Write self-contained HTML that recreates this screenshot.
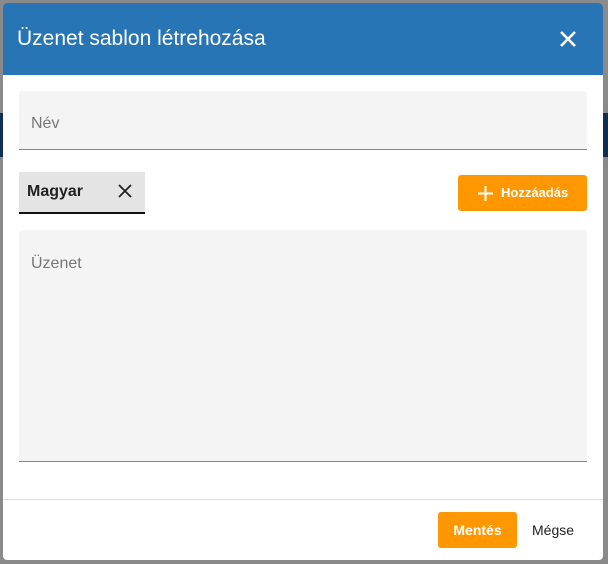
<!DOCTYPE html>
<html><head><meta charset="utf-8"><style>
body{margin:0;width:608px;height:564px;background:#8a8a8a;position:relative;overflow:hidden;font-family:"Liberation Sans",Roboto,sans-serif}
.bgband{position:absolute;left:0;width:608px;top:113px;height:44px;background:#0f2d55}
.dlg{position:absolute;left:3px;top:3px;width:600px;height:557px;background:#fff;border-radius:4px;overflow:hidden}
.hdr{height:72px;background:#2775b5;color:#fff;font-size:21px;line-height:72px;padding-left:14px}
.close{position:absolute;right:27px;top:28px}
.f1{position:absolute;left:16px;top:88px;width:568px;height:58px;background:#f4f4f4;border-bottom:1px solid #888;border-radius:4px 4px 0 0}
.f1 span,.f2 span{position:absolute;left:12px;color:#777;font-size:16px}
.chip{position:absolute;left:16px;top:169px;width:126px;height:40px;background:#e4e4e4;border-bottom:2px solid #111;font-weight:bold;font-size:16px;color:#222}
.add{position:absolute;left:455px;top:172px;width:129px;height:36px;background:#ff9800;border-radius:3px;color:#fff;font-weight:bold;font-size:13px}
.f2{position:absolute;left:16px;top:227px;width:568px;height:231px;background:#f4f4f4;border-bottom:1px solid #888;border-radius:4px 4px 0 0}
.ftr{position:absolute;left:0;top:496px;width:600px;border-top:1px solid #e0e0e0}
.save{position:absolute;left:435px;top:509px;width:79px;height:36px;background:#ff9800;border-radius:3px;color:#fff;font-weight:bold;font-size:14px;text-align:center;line-height:36px}
.cancel{position:absolute;left:529px;top:509px;line-height:36px;font-size:14px;color:#222}
</style></head><body>
<div class="bgband"></div>
<div class="dlg">
<div class="hdr">Üzenet sablon létrehozása</div>
<svg class="close" width="16" height="16" viewBox="0 0 16 16"><path d="M1 1L15 15M15 1L1 15" stroke="#fff" stroke-width="2.6"/></svg>
<div class="f1"><span style="top:24px">Név</span></div>
<div class="chip"><span style="position:absolute;left:8px;top:11px">Magyar</span>
<svg style="position:absolute;left:99px;top:12px" width="14" height="14" viewBox="0 0 14 14"><path d="M1 1L13 13M13 1L1 13" stroke="#222" stroke-width="1.8"/></svg></div>
<div class="add"><svg style="position:absolute;left:20px;top:11px" width="15" height="15" viewBox="0 0 15 15"><path d="M7.5 0V15M0 7.5H15" stroke="#fff" stroke-width="2"/></svg><span style="position:absolute;left:43px;top:10px">Hozzáadás</span></div>
<div class="f2"><span style="top:25px">Üzenet</span></div>
<div class="ftr"></div>
<div class="save">Mentés</div>
<div class="cancel">Mégse</div>
</div>
</body></html>
